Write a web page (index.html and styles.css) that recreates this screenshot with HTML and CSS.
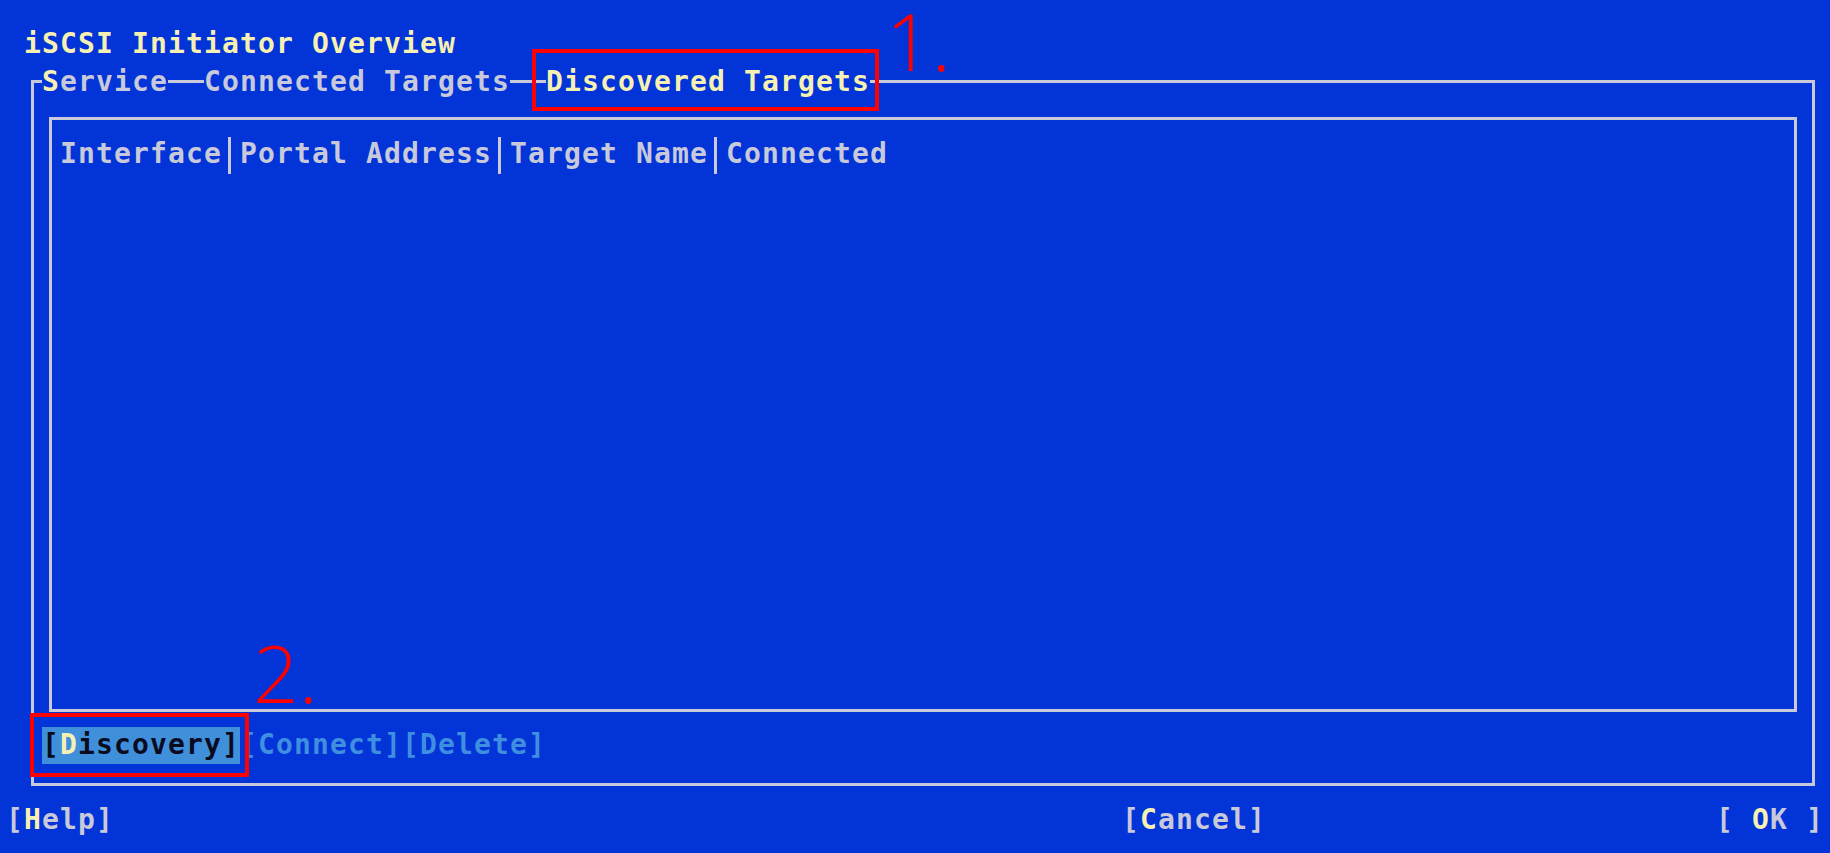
FILE: index.html
```html
<!DOCTYPE html>
<html>
<head>
<meta charset="utf-8">
<title>iSCSI Initiator Overview</title>
<link rel="stylesheet" href="styles.css">
</head>
<body>
<div class="screen">
  <div class="title">iSCSI Initiator Overview</div>
  <div class="outer">
    <div class="tabs">
      <span class="tab"><span class="hk">S</span>ervice</span>
      <span class="tab">Connected Targets</span>
      <span class="tab active">Discovered Targets</span>
    </div>
    <div class="inner">
      <div class="thead">
        <span class="col">Interface</span><span class="sep"></span>
        <span class="col">Portal Address</span><span class="sep"></span>
        <span class="col">Target Name</span><span class="sep"></span>
        <span class="col">Connected</span>
      </div>
    </div>
    <div class="buttons">
      <span class="btn focused">[<span class="hk">D</span>iscovery]</span>
      <span class="btn">[Connect]</span>
      <span class="btn">[Delete]</span>
    </div>
  </div>
  <div class="footer">
    <span class="fbtn help">[<span class="hk">H</span>elp]</span>
    <span class="fbtn cancel">[<span class="hk">C</span>ancel]</span>
    <span class="fbtn ok">[ <span class="hk">O</span>K ]</span>
  </div>
  <div class="mark box1"></div>
  <div class="mark box2"></div>
  <div class="note note1">1.</div>
  <div class="note note2">2.</div>
</div>
</body>
</html>
```
FILE: styles.css
```css
html, body {
  margin: 0;
  background: #0334d7;
}
body {
  width: 1830px;
  height: 853px;
  overflow: hidden;
}
.screen {
  position: relative;
  box-sizing: border-box;
  height: 853px;
  padding-top: 26px;
  font-family: "DejaVu Sans Mono", monospace;
  font-weight: bold;
  font-size: 28px;
  letter-spacing: 1.143px;
  line-height: 33px;
  color: #c8cadc;
}
.title {
  height: 37px;
  line-height: 35px;
  padding-left: 24px;
  color: #f6f1b3;
}
.tab, .col, .btn, .fbtn, .title {
  white-space: pre;
}
.outer {
  box-sizing: border-box;
  width: 1784px;
  margin: 17px 0 0 31px;
  border: 3px solid #c8cadc;
  padding-bottom: 19px;
}
.tabs {
  display: flex;
  gap: 36px;
  height: 37px;
  line-height: 37px;
  margin-top: -20px;
  padding-left: 8px;
}
.tab {
  background: #0334d7;
}
.tab.active {
  color: #f6f1b3;
}
.inner {
  box-sizing: border-box;
  height: 595px;
  margin: 17px 15px 0;
  border: 3px solid #c8cadc;
  padding: 17px 0 0 8px;
}
.thead {
  display: flex;
  height: 37px;
}
.sep {
  width: 18px;
  background: linear-gradient(90deg, transparent 6px, #c8cadc 6px, #c8cadc 9px, transparent 9px);
}
.buttons {
  display: flex;
  height: 37px;
  line-height: 35px;
  margin: 15px 0 0 8px;
}
.btn {
  color: #3f8fe0;
}
.btn.focused {
  background: #3f8fdb;
  color: #0a0b1e;
}
.hk {
  color: #f6f1b3;
}
.footer {
  display: flex;
  height: 37px;
  margin-top: 17px;
  padding: 0 6px;
}
.cancel {
  margin-left: 1008px;
}
.ok {
  margin-left: auto;
}
.mark {
  position: absolute;
  box-sizing: border-box;
  border: 4px solid #ff0000;
}
.box1 {
  left: 532px;
  top: 49px;
  width: 347px;
  height: 62px;
}
.box2 {
  left: 30px;
  top: 713px;
  width: 219px;
  height: 64px;
}
.note {
  position: absolute;
  font-family: "Open Sans", sans-serif;
  font-weight: 300;
  font-size: 80px;
  line-height: 1;
  letter-spacing: 0;
  color: #ff0000;
}
.note1 {
  left: 886px;
  top: 0;
}
.note2 {
  left: 253px;
  top: 632px;
}
```
